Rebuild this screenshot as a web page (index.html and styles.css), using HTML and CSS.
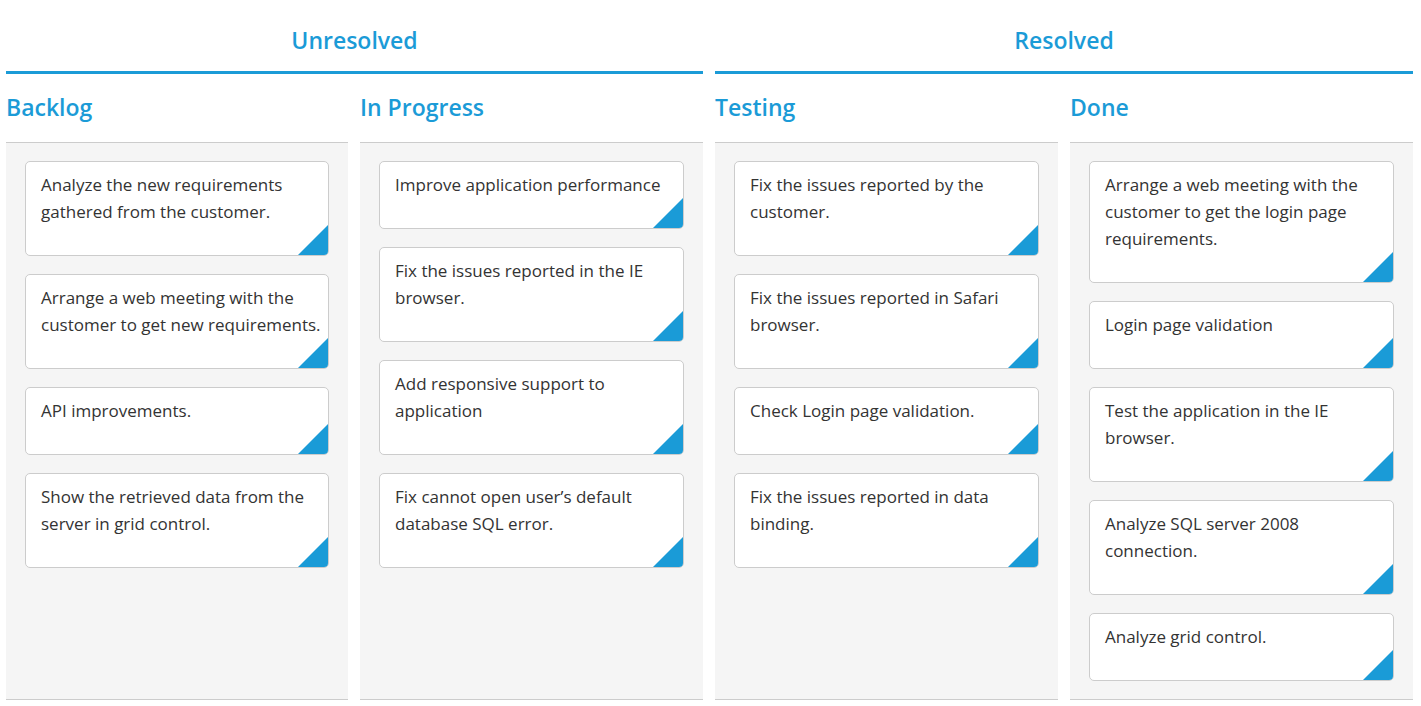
FILE: index.html
```html
<!DOCTYPE html>
<html>
<head>
<meta charset="utf-8">
<link rel="stylesheet" href="styles.css">
</head>
<body>
<div class="board">
  <div class="group span2">Unresolved</div>
  <div class="group span2">Resolved</div>

  <div class="col-title">Backlog</div>
  <div class="col-title">In Progress</div>
  <div class="col-title">Testing</div>
  <div class="col-title">Done</div>

  <div class="col">
    <div class="card">Analyze the new requirements gathered from the customer.</div>
    <div class="card">Arrange a web meeting with the customer to get new requirements.</div>
    <div class="card">API improvements.</div>
    <div class="card">Show the retrieved data from the server in grid control.</div>
  </div>
  <div class="col">
    <div class="card">Improve application performance</div>
    <div class="card">Fix the issues reported in the IE browser.</div>
    <div class="card">Add responsive support to application</div>
    <div class="card">Fix cannot open user’s default database SQL error.</div>
  </div>
  <div class="col">
    <div class="card">Fix the issues reported by the customer.</div>
    <div class="card">Fix the issues reported in Safari browser.</div>
    <div class="card">Check Login page validation.</div>
    <div class="card">Fix the issues reported in data binding.</div>
  </div>
  <div class="col">
    <div class="card">Arrange a web meeting with the customer to get the login page requirements.</div>
    <div class="card">Login page validation</div>
    <div class="card">Test the application in the IE browser.</div>
    <div class="card">Analyze SQL server 2008 connection.</div>
    <div class="card">Analyze grid control.</div>
  </div>
</div>
</body>
</html>
```

FILE: styles.css
```css
html, body {
  margin: 0;
  padding: 0;
  background: #fff;
}
body {
  font-family: "Open Sans", "Noto Sans", sans-serif;
  color: #333;
  padding: 0 8px 0 6px;
  height: 706px;
  overflow: hidden;
}
.board {
  display: grid;
  grid-template-columns: 342px 343px 343px 343px;
  grid-template-rows: 74px 68px 558px;
  column-gap: 12px;
}
.group {
  grid-column: span 2;
  border-bottom: 3px solid #1b9bd7;
  color: #1b9bd7;
  font-size: 23px;
  font-weight: 600;
  text-align: center;
  line-height: 32px;
  padding-top: 24px;
  box-sizing: border-box;
}
.col-title {
  color: #1b9bd7;
  font-size: 23px;
  font-weight: 600;
  line-height: 32px;
  padding-top: 17px;
}
.col {
  background: #f5f5f5;
  border-top: 1px solid #ccc;
  border-bottom: 1px solid #ccc;
  padding: 18px 19px 0 19px;
  display: flex;
  flex-direction: column;
  gap: 18px;
  box-sizing: border-box;
}
.card {
  position: relative;
  background: #fff;
  border: 1px solid #ccc;
  border-radius: 5px;
  padding: 9px 6px 30px 15px;
  font-size: 17px;
  line-height: 27px;
  overflow: hidden;
}
.card::after {
  content: "";
  position: absolute;
  right: 0;
  bottom: 0;
  width: 30px;
  height: 30px;
  background: #1a9bd7;
  clip-path: polygon(100% 0, 100% 100%, 0 100%);
}
```
